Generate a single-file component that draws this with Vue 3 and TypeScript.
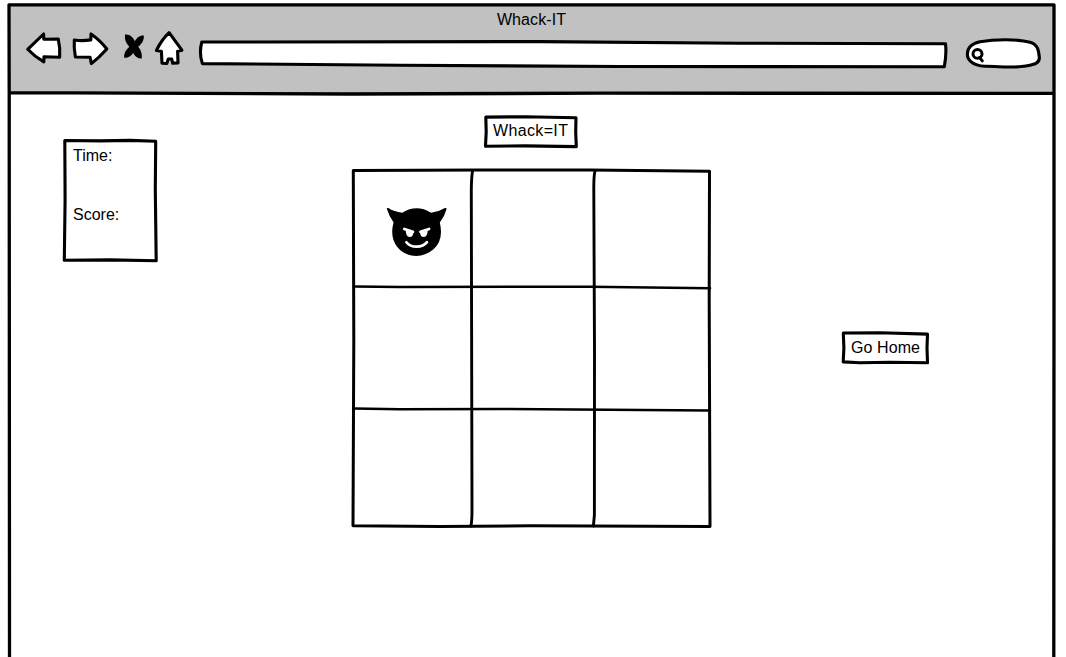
<script setup lang="ts">
import { ref } from 'vue'

const title = 'Whack-IT'
const stats = ['Time:', 'Score:']
const cells = Array.from({ length: 9 }, (_, i) => i)
const active = ref(0)
</script>

<template>
  <div class="window">
    <svg class="sketch" viewBox="0 0 1066 657" aria-hidden="true">
      <path class="chrome" d="M9 4.5H1054V93.5L600 94L9 92.5Z" />
      <path class="line frame" d="M9 4.8H1054V300L1053.8 660M9 4.8L9.2 92L9.5 660M10 92.7L350 94L600 93.2L1054 93.3" />
    </svg>
    <header class="header">
      <div class="title">{{ title }}</div>
      <nav class="toolbar">
        <svg class="icons" viewBox="20 25 170 50" aria-hidden="true">
          <path class="line fill" d="M27.7 49.3L43.6 34L43.8 39.3L58.3 39.1Q60.3 48 59.7 57.2L44 56.8L43.8 61.9Q34.5 56.5 27.7 49.3Z" />
          <path class="line fill" d="M74.3 40Q82 41.2 90.8 39.9L91 33.9Q100.5 40.5 106.8 49Q99.7 57 91.4 63.6L90 57.2L75.4 57Q73.7 48 74.3 40Z" />
          <path d="M125 34.6C129.5 34 133 37 134.8 41.2C136.8 37.5 139.5 35.2 143.8 35.4C144.2 40 142 43.5 138.2 46.8C141 50 142.3 54 141.8 58.6C137.5 58.6 135 56.5 133.2 53C131 56.5 128 58 124.1 57.7C123.7 53.5 125.8 50 129.3 46.8C126 43.5 124.3 39.5 125 34.6Z" />
          <path class="line fill" d="M169.1 32.7Q175.5 41.5 181.9 50.2L177.6 51.2L178 62.9L172.7 63.3L171.7 59L168.3 59L166.8 63.5L162 63.2L161.4 51.3L156.4 50.5Q161.5 40 169.1 32.7Z" />
        </svg>
        <svg class="address" viewBox="195 38 755 32" aria-hidden="true">
          <path class="line fill" d="M201.8 42L540 41.6L740 43.2L945.5 43.8Q946.7 54 944.3 66.7L620 66.5L400 65.2L202.4 63.6Q198.8 53 201.8 42Z" />
        </svg>
        <svg class="search" viewBox="962 34 84 38" aria-hidden="true">
          <path class="line fill" d="M980 41.8C995 39 1017 38.8 1030 42.3C1038 44.4 1038.7 51 1039.3 57C1040 64 1033 64.8 1026 66C1012 68.4 999 66.2 985 66.3C972 65.5 967 59.5 967.4 53.5C967.7 47 972 43.5 980 41.8Z" />
          <ellipse class="lens" cx="977.5" cy="53.9" rx="4.5" ry="4.3" />
          <path class="lens" d="M979.5 57.5L982.3 60.9" />
        </svg>
      </nav>
    </header>

    <main class="content">
      <aside class="stats">
        <svg class="sketch" viewBox="60 136 100 128" aria-hidden="true">
          <path class="line" d="M64.8 140.5L100 140.9L130 140.4L155.7 141.3L155.3 190L156.2 260.7L110 259.9L64.3 260.3L65.1 200Z" />
        </svg>
        <div v-for="stat in stats" :key="stat" class="stat">{{ stat }}</div>
      </aside>

      <section class="game">
        <div class="label">
          <svg class="sketch" viewBox="482 112 98 38" aria-hidden="true">
            <path class="line" d="M485.8 117.1L525 116.7L576 117.7L575.7 132L576.3 146.6L525 145.9L485.5 146.2L486.2 132Z" />
          </svg>
          Whack=IT
        </div>
        <div class="board">
          <svg class="sketch" viewBox="350 166 364 364" aria-hidden="true">
            <path class="line outline" d="M353.3 170.5L480 170L590 170.1L709.5 171.3L709.2 300L710 526.5L530 525.8L440 526.5L353 525.8L353.8 340Z" />
            <path class="line column" d="M472.5 171Q471.4 178 471.3 190L472 510Q472 520 471 526M595 171Q593.7 176 593.8 190L594.5 350L594.4 515L593.4 526" />
            <path class="line row" d="M354 286.4L400 287L590 286.7L710 288.3M354 408.5L400 409.3L500 409L710 410.5" />
          </svg>
          <div v-for="cell in cells" :key="cell" class="cell" @click="active = cell">
            <svg v-if="cell === active" class="devil" viewBox="384 204 66 56" role="img" aria-label="Devil">
              <path d="M387 209.3Q386.3 207.5 388.3 208Q394 211.7 402.3 212.7Q416.5 204 431 212.7Q439 211.7 445 208Q447 207.5 446.4 209.5Q444.8 216 439.8 222.5Q444 240 433.5 249.3C423 258 410 258 400.3 250.2C391.5 242.5 391 231 393.6 222.5Q389 216 387 209.3Z" />
              <path class="face" d="M404.3 229L413 231.9M429.1 229L420.4 231.9M406.4 242.2C411 248.2 422.3 248.2 427 242.2" />
              <path class="eyes" d="M405.7 230.2L413.2 232.7Q413.2 237.1 409.4 237Q405.8 236.5 405.7 230.2ZM427.7 230.2L420.2 232.7Q420.2 237.1 424 237Q427.6 236.5 427.7 230.2Z" />
            </svg>
          </div>
        </div>
      </section>

      <button class="home" type="button">
        <svg class="sketch" viewBox="840 329 91 37" aria-hidden="true">
          <path class="line" d="M843.3 333L880 332.7L927.5 334.1L927 348L927.5 362.8L890 362.2L860 362.8L843.2 361.9L843.9 348Z" />
        </svg>
        Go Home
      </button>
    </main>
  </div>
</template>

<style>
body {
  overflow: hidden;
  background: #fff;
}
</style>

<style scoped>
.window {
  position: relative;
  width: 1066px;
  height: 657px;
  overflow: hidden;
  color: #000;
  font: 16px/20px "Liberation Sans", Arial, sans-serif;
}
svg {
  display: block;
  flex: none;
}
.sketch {
  position: absolute;
  inset: 0;
  width: 100%;
  height: 100%;
  pointer-events: none;
}
.line {
  fill: none;
  stroke: #000;
  stroke-width: 3.1;
  stroke-linejoin: round;
  stroke-linecap: round;
}
.line.fill { fill: #fff; }
.line.frame { stroke-width: 3.3; }
.line.row { stroke-width: 2.5; }
.line.column { stroke-width: 2.9; }
.line.outline { stroke-width: 3; }
.chrome { fill: #c1c1c1; }
.header {
  position: relative;
  box-sizing: border-box;
  height: 94px;
  padding-top: 10px;
}
.title {
  width: 1063px;
  height: 15px;
  text-align: center;
  letter-spacing: 0.1px;
}
.toolbar {
  display: flex;
  align-items: flex-start;
  padding-left: 20px;
}
.icons { width: 170px; height: 50px; }
.address { width: 755px; height: 32px; margin: 13px 12px 0 5px; }
.search { width: 84px; height: 38px; margin-top: 9px; }
.lens {
  fill: none;
  stroke: #000;
  stroke-width: 3;
  stroke-linecap: round;
}
.content {
  display: grid;
  grid-template-columns: 290px 490px 91px;
  align-items: start;
  padding-left: 60px;
}
.stats {
  position: relative;
  display: grid;
  align-content: start;
  row-gap: 39px;
  box-sizing: border-box;
  width: 100px;
  height: 128px;
  margin-top: 42px;
  padding: 10px 13px;
}
.game {
  display: flex;
  flex-direction: column;
  width: 364px;
  padding-top: 18px;
}
.label {
  position: relative;
  box-sizing: border-box;
  width: 98px;
  height: 38px;
  margin: 0 0 16px 132px;
  padding: 9px 0 0 11px;
  white-space: nowrap;
  letter-spacing: 0.35px;
}
.board {
  position: relative;
  box-sizing: border-box;
  display: grid;
  grid-template: 117px 122px 117px / 119px 122px 116px;
  width: 364px;
  height: 364px;
  padding: 4px 3px;
}
.cell {
  display: flex;
  align-items: center;
  justify-content: center;
  padding: 6px 0 0 8px;
}
.devil { width: 66px; height: 56px; }
.face {
  fill: none;
  stroke: #fff;
  stroke-width: 2.7;
  stroke-linecap: round;
}
.eyes { fill: #fff; }
.home {
  position: relative;
  width: 91px;
  height: 37px;
  margin-top: 235px;
  padding: 0;
  border: 0;
  background: none;
  color: inherit;
  font: inherit;
  letter-spacing: 0.1px;
}
</style>
